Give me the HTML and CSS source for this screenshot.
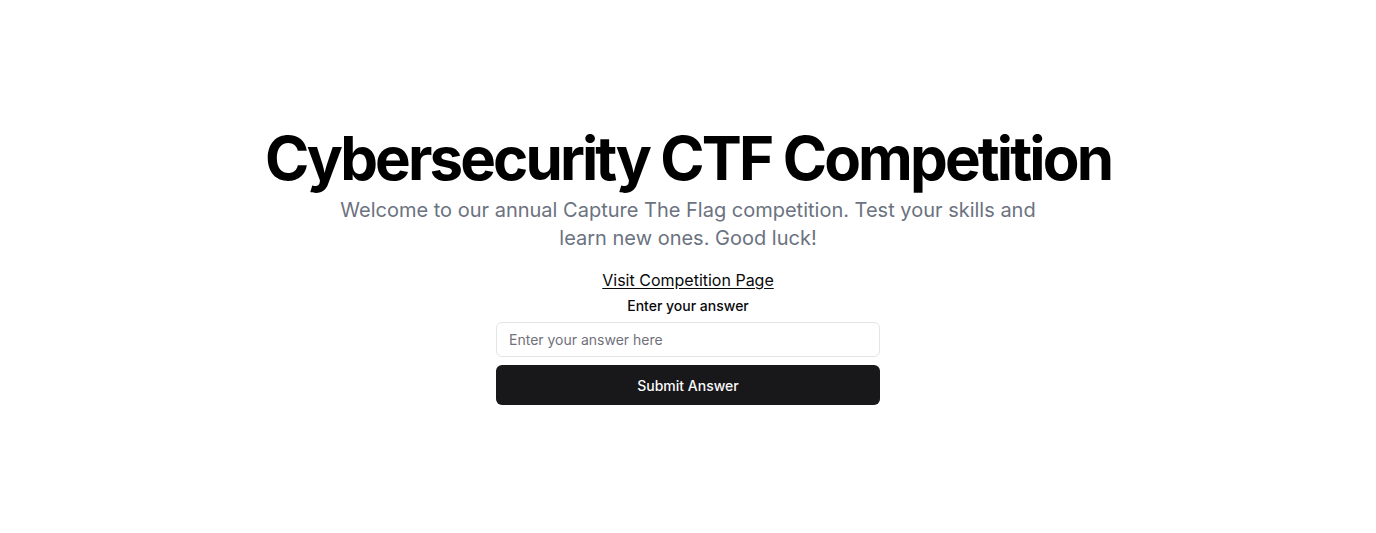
FILE: index.html
```html
<!DOCTYPE html>
<html lang="en">
<head>
<meta charset="utf-8">
<title>Cybersecurity CTF Competition</title>
<link rel="stylesheet" href="styles.css">
</head>
<body>
<main class="page">
  <section class="hero">
    <div class="intro">
      <h1 class="title">Cybersecurity CTF Competition</h1>
      <p class="lead">Welcome to our annual Capture The Flag competition. Test your skills and learn new ones. Good luck!</p>
    </div>
    <div class="actions">
      <a class="visit" href="#">Visit Competition Page</a>
      <form class="answer-form">
        <label class="label" for="answer">Enter your answer</label>
        <input class="input" id="answer" type="text" placeholder="Enter your answer here">
        <button class="button" type="button">Submit Answer</button>
      </form>
    </div>
  </section>
</main>
</body>
</html>
```

FILE: styles.css
```css
* { box-sizing: border-box; }
html, body { margin: 0; padding: 0; background: #ffffff; }
body {
  font-family: Inter, "Noto Sans", "Liberation Sans", sans-serif;
  color: #09090b;
}
.page {
  min-height: 533px;
  display: flex;
  align-items: center;
  justify-content: center;
}
.hero {
  display: flex;
  flex-direction: column;
  align-items: center;
  gap: 16px;
  text-align: center;
}
.intro {
  display: flex;
  flex-direction: column;
  align-items: center;
  gap: 8px;
}
.title {
  margin: 0;
  font-size: 60px;
  line-height: 60px;
  font-weight: 700;
  letter-spacing: -0.048em;
  color: #000;
}
.lead {
  margin: 0;
  max-width: 700px;
  font-size: 20px;
  line-height: 28px;
  color: #6b7280;
}
.actions {
  display: flex;
  flex-direction: column;
  align-items: center;
  gap: 4px;
}
.visit {
  font-size: 16px;
  line-height: 24px;
  color: #09090b;
  text-decoration: underline;
  text-underline-offset: 2px;
}
.answer-form {
  width: 384px;
  display: flex;
  flex-direction: column;
  gap: 8px;
}
.label {
  font-size: 14px;
  line-height: 20px;
  font-weight: 500;
  margin-bottom: -2px;
}
.input {
  height: 35px;
  width: 100%;
  border: 1px solid #e4e4e7;
  border-radius: 6px;
  padding: 0 12px;
  font-family: inherit;
  font-size: 14px;
  color: #09090b;
  background: #fff;
}
.input::placeholder { color: #71717a; }
.button {
  height: 40px;
  width: 100%;
  border: 0;
  border-radius: 6px;
  background: #18181b;
  color: #fafafa;
  font-family: inherit;
  font-size: 14px;
  font-weight: 500;
}
```
